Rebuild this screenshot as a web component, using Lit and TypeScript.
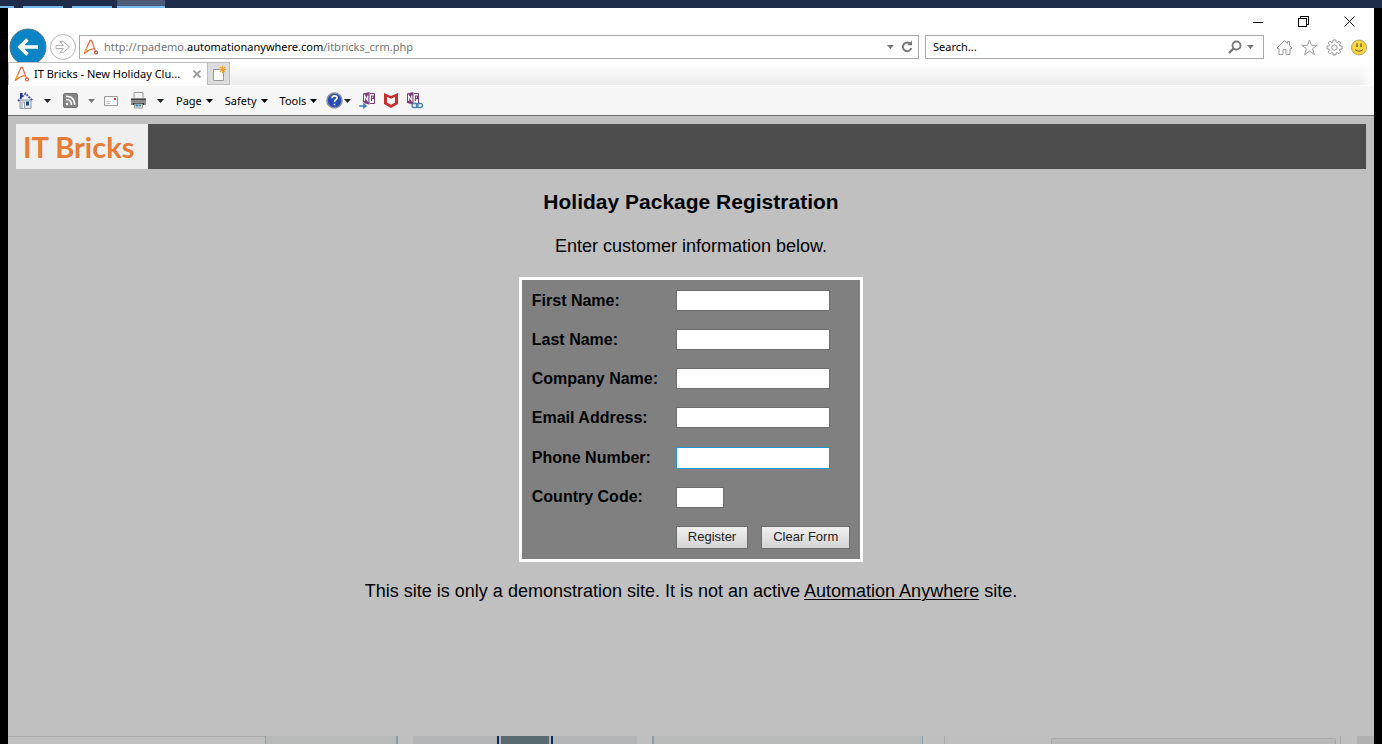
import { LitElement, html, css, svg } from "lit";
import { customElement } from "lit/decorators.js";

const aaMark = html`<svg width="16" height="16" viewBox="0 0 16 16" fill="none" stroke-linecap="round" stroke-linejoin="round" aria-hidden="true">
  <path d="M1.5 14 L7 1.5 L8.5 1.5 L10.5 7" stroke="#ef6a45" stroke-width="1.3" />
  <path d="M1.5 14 L3.6 9.5" stroke="#f7b02c" stroke-width="1.6" />
  <path d="M1.5 14.2 Q7 9.6 10.8 9.8 M10.5 7 L12.5 12.6" stroke="#f0703f" stroke-width="1.2" />
  <circle cx="13" cy="13.4" r="1.5" stroke="#e8533f" stroke-width="1.1" />
</svg>`;

const caret = (color = "#222") => html`<svg width="7" height="4" viewBox="0 0 7 4" aria-hidden="true"><path d="M0 0h7L3.5 4z" fill=${color} /></svg>`;

const noteShape = svg`<path d="M2 1.5 L8.5 0 V12.5 L2 11z" fill="#80397b"/><path d="M9 1.5h4.5v10H9" fill="#fff" stroke="#80397b"/><path d="M10.5 3.500v5.500M10.5 4h2v2.500h-2" fill="none" stroke="#80397b" stroke-width="1.200"/><path d="M3.6 8.8V3.8L6.8 8.6V3.4" fill="none" stroke="#fff" stroke-width="1.2"/>`;

@customElement("browser-chrome")
export class BrowserChrome extends LitElement {
  static styles = css`
    :host { display: block; background: #fff; color: #000; font: 11px/16px "Noto Sans", "Open Sans", sans-serif; }
    button { border: 0; padding: 0; margin: 0; background: none; font: inherit; color: inherit; display: flex; align-items: center; justify-content: center; }
    svg { display: block; flex: none; }
    .caption { display: flex; justify-content: flex-end; height: 27px; padding-right: 2px; }
    .caption button { width: 46px; height: 27px; }
    .nav { display: flex; align-items: center; height: 24px; padding: 0 7px 3px 0; }
    .back { width: 40px; height: 24px; }
    .forward { width: 30px; height: 24px; }
    .back svg, .forward svg { overflow: visible; }
    .field { display: flex; align-items: center; box-sizing: border-box; height: 24px; border: 1px solid #a9a9a9; background: #fff; }
    .address { flex: 830 1 0; margin-left: 1px; padding: 0 5px 0 3px; }
    .url { flex: 1; margin-left: 5px; color: #757575; white-space: nowrap; }
    .url b { font-weight: 400; color: #000; }
    .address .refresh { margin-left: 7px; }
    .search { flex: 321 1 0; margin-left: 6px; padding: 0 9px 0 7px; }
    .search input { flex: 1; min-width: 0; border: 0; outline: 0; padding: 0; background: none; font: inherit; }
    .search input::placeholder { color: #000; opacity: 1; }
    .search .drop { margin-left: 5px; }
    .tools { display: flex; gap: 8px; margin-left: 12px; }
    .tabs { display: flex; height: 23px; position: relative; background: linear-gradient(#fff, #ececec); }
    .tab { display: flex; align-items: center; box-sizing: border-box; width: 199px; padding: 0 6px 0 5px; background: #fff; border: 1px solid #bdbdbd; border-width: 1px 0 0 1px; }
    .title { flex: 1; margin-left: 4px; white-space: nowrap; }
    .new { box-sizing: border-box; width: 23px; border: 1px solid #bdbdbd; background: #dcdcdc; }
    .fade { width: 16px; margin-left: auto; background: linear-gradient(90deg, transparent, #fff); }
    .commands { display: flex; align-items: center; box-sizing: border-box; height: 31px; padding-left: 9px; background: #f6f6f6; border-top: 1px solid #fff; border-bottom: 1px solid #6c6c6c; }
    .commands button { height: 24px; }
    .split { gap: 10px; margin-right: 12px; }
    .mail { margin: 0 12px 0 -3px; }
    .menu { gap: 4px; margin-right: 12px; }
    .help { gap: 1px; margin: 0 8px 0 -3px; }
    .addon { margin-right: 7px; }
  `;

  render() {
    return html`
      <div class="caption">
        <button aria-label="Minimize"><svg width="11" height="11" shape-rendering="crispEdges"><path d="M1 6.5h10" stroke="#000" /></svg></button>
        <button aria-label="Restore"><svg width="11" height="11" fill="none" stroke="#000" shape-rendering="crispEdges"><path d="M.5 2.5h8v8h-8zM2.5 2.5v-2h8v8h-2" /></svg></button>
        <button aria-label="Close"><svg width="11" height="11" stroke="#000"><path d="M.5 .5l10 10M10.500 .5l-10 10" /></svg></button>
      </div>
      <div class="nav">
        <button class="back" aria-label="Back"><svg width="38" height="38" viewBox="0 0 38 38"><circle cx="19" cy="19" r="18" fill="#0a84c4" stroke="#51798f" /><path d="M29 19H11M18.500 11.500L11 19l7.500 7.500" fill="none" stroke="#fff" stroke-width="3.600" /></svg></button>
        <button class="forward" aria-label="Forward"><svg width="28" height="28" viewBox="0 0 28 28" fill="#fff" stroke="#b5b5b5"><circle cx="14" cy="14" r="12.500" /><path d="M7 12.500h7.500l-3.500-4h3.300L20.500 14l-6.200 5.500H11l3.500-4H7z" /></svg></button>
        <div class="field address">
          ${aaMark}
          <span class="url">http://rpademo.<b>automationanywhere.com</b>/itbricks_crm.php</span>
          <button aria-label="Show address history">${caret("#777")}</button>
          <button class="refresh" aria-label="Refresh"><svg width="12" height="14" viewBox="0 0 12 14" fill="none"><path d="M9.600 4.300A4.300 4.300 0 1 0 10.300 8" stroke="#777" stroke-width="1.900" /><path d="M6.300 5.200h4.700V.6z" fill="#777" /></svg></button>
        </div>
        <div class="field search">
          <input aria-label="Search" placeholder="Search..." />
          <button aria-label="Go"><svg width="14" height="14" viewBox="0 0 14 14" fill="none" stroke="#777"><circle cx="8.500" cy="5.500" r="4" stroke-width="1.800" /><path d="M5.500 8.500L1 13" stroke-width="2.400" /></svg></button>
          <button class="drop" aria-label="Search options">${caret("#777")}</button>
        </div>
        <div class="tools">
          <button aria-label="Home"><svg width="17" height="17" viewBox="0 0 17 17" fill="none" stroke="#999"><path d="M1 9L8.500 1.500 11.500 4.500V2.500h2v4L16 9l-1 1-1-.5v6h-4v-5H7v5H3v-6L2 10z" /></svg></button>
          <button aria-label="Favorites"><svg width="17" height="17" viewBox="0 0 17 17" fill="none" stroke="#999"><path d="M8.500 1l2 5.300h5.700l-4.600 3.400 1.800 5.900-4.900-3.500-4.900 3.500 1.800-5.900L.8 6.300h5.700z" /></svg></button>
          <button aria-label="Settings"><svg width="17" height="17" viewBox="0 0 17 17" fill="none" stroke="#999"><path d="M7 1h3v2l1.400.6 1.500-1.500 2 2L13.400 5.600 14 7h2v3h-2l-.6 1.400 1.500 1.500-2 2-1.500-1.500L10 14v2H7v-2l-1.400-.6-1.500 1.500-2-2 1.500-1.500L3 10H1V7h2l.6-1.400L2.100 4.100l2-2 1.500 1.500L7 3z" /><circle cx="8.500" cy="8.500" r="2.700" /></svg></button>
          <button aria-label="Feedback"><svg width="16" height="17" viewBox="0 0 16 17"><circle cx="8" cy="8.500" r="7.500" fill="#fbd53c" stroke="#b2a36a" /><path d="M6 4.500v3.500M10 4.500v3.500" stroke="#6b5a20" stroke-width="1.300" /><path d="M4 10.500q4 3.500 8 0" fill="none" stroke="#6b5a20" /></svg></button>
        </div>
      </div>
      <div class="tabs">
        <div class="tab">${aaMark}<span class="title">IT Bricks - New Holiday Clu...</span>
          <button aria-label="Close tab"><svg width="8" height="8" viewBox="0 0 8 8" stroke="#999" stroke-width="1.800"><path d="M.5 .5l7 7M7.500 .5l-7 7" /></svg></button>
        </div>
        <button class="new" aria-label="New tab"><svg width="16" height="16" viewBox="0 0 16 16"><path d="M2.500 3.500h10v11h-10z" fill="#fff" stroke="#999" /><path d="M11.500 0v7M8 3.500h7M9 1l5 5M14 1L9 6" stroke="#e8a330" stroke-width="1.100" /></svg></button>
        <div class="fade"></div>
      </div>
      <div class="commands">
        <button class="split" aria-label="Home page"><svg width="17" height="17" viewBox="0 0 17 17"><path d="M3 8h11v8.500H3z" fill="#dfe6ee" stroke="#8b98a8" /><path d="M1 9L8.500 1.500 16 9" fill="none" stroke="#4659b8" stroke-width="2" stroke-dasharray="2 1" /><path d="M3 1h2.500v4L3 7z" fill="#27309c" /><path d="M5 10h2.500v6.500H5z" fill="#f7f7f7" stroke="#98a3af" /><path d="M9 9.500h3v4H9z" fill="#194a7d" /></svg>${caret()}</button>
        <button class="split" aria-label="Feeds"><svg width="15" height="15" viewBox="0 0 15 15"><rect x=".5" y=".5" width="14" height="14" rx="1.500" fill="#858585" stroke="#737373" /><g fill="none" stroke="#fff" stroke-width="1.600"><path d="M3 6.500q5.500 0 5.500 5.500M3 3.300q8.700 0 8.700 8.700" /></g><circle cx="4" cy="11" r="1.200" fill="#fff" /></svg>${caret("#777")}</button>
        <button class="mail" aria-label="Read mail"><svg width="14" height="12" viewBox="0 0 14 12"><path d="M.5 1.500h13v9H.5z" fill="#fafafa" stroke="#9b9b9b" /><path d="M2 6.500h5M2 8.500h4" stroke="#ccc" /><path d="M10 3h2v2h-2z" fill="#d33" /></svg></button>
        <button class="split" aria-label="Print"><svg width="17" height="17" viewBox="0 0 17 17"><path d="M4 .5h9V7H4z" fill="#f5f5f5" stroke="#999" /><path d="M1 6h15v7H1z" fill="#8c8c8c" /><path d="M1 7.500h15" stroke="#444" /><path d="M3 11h11v2H3z" fill="#333" /><path d="M4.500 12h8v4h-8z" fill="#e8f0f0" stroke="#999" /><path d="M5.500 13.500h3" stroke="#2b79b5" stroke-width="2" /><path d="M9 13.500h2" stroke="#3ba06c" stroke-width="2" /></svg>${caret()}</button>
        <button class="menu">Page ${caret("#000")}</button>
        <button class="menu">Safety ${caret("#000")}</button>
        <button class="menu">Tools ${caret("#000")}</button>
        <button class="help" aria-label="Help"><svg width="17" height="17" viewBox="0 0 17 17"><circle cx="8.500" cy="8.500" r="7.500" fill="#254db3" stroke="#8c929c" stroke-width="1.600" /><path d="M6 6.300q.2-2.500 2.600-2.500t2.500 2q0 1.200-1.300 2T8.500 10.300M8.500 11.700v1.600" fill="none" stroke="#fff" stroke-width="1.700" /></svg>${caret()}</button>
        <button class="addon" aria-label="Send to OneNote"><svg width="17" height="17" viewBox="0 0 17 17"><g transform="translate(2 0)">${noteShape}</g><path d="M0 13h4v-3l4.500 4L4 17.500V15H0z" fill="#3f7fb8" stroke="#f6f6f6" stroke-width=".5" /></svg></button>
        <button class="addon" aria-label="Web protection"><svg width="16" height="17" viewBox="0 0 16 17"><path d="M1 1l7 3 7-3v11l-7 4-7-4z" fill="#c62f32" /><path d="M4 5l4 1.800L12 5v5.500L8 12.800 4 10.500z" fill="#f6f6f6" /></svg></button>
        <button class="addon" aria-label="Linked notes"><svg width="18" height="17" viewBox="0 0 18 17"><g transform="translate(-1 0)">${noteShape}</g><g fill="#f6f6f6" stroke="#4a7fb3" stroke-width="1.300"><rect x="6" y="11.500" width="6" height="4" rx="2" /><rect x="10.500" y="11.500" width="6" height="4" rx="2" fill="none" /></g></svg></button>
      </div>
    `;
  }
}

@customElement("registration-page")
export class RegistrationPage extends LitElement {
  static styles = css`
    :host { display: flex; flex-direction: column; align-items: center; flex: 1; padding: 8px 8px 0; background: silver; color: #000; font: 18px/22px "Liberation Sans", Arial, sans-serif; }
    .banner { align-self: stretch; background: #4d4d4d; display: flex; }
    .logo { box-sizing: border-box; width: 132px; height: 45px; padding-left: 7px; background: #efefef; color: #e87b35; font: 700 29px/45px Lato, sans-serif; white-space: nowrap; }
    h1 { margin: 21px 0 0; font-size: 21px; line-height: 24px; }
    p { margin: 21px 0 20px; }
    form { display: grid; grid-template-columns: 144px auto; align-content: space-between; align-items: center; justify-items: start; box-sizing: border-box; min-height: 285px; padding: 10px; border: 3px solid #fff; background: gray; }
    label { font-size: 16px; line-height: 20px; font-weight: 700; }
    input { box-sizing: border-box; width: 154px; height: 21px; margin: 0; padding: 1px; border: 1px solid #6d6d6d; border-radius: 0; background: #fff; outline: 0; font: 13px "Liberation Sans", Arial, sans-serif; }
    .short { width: 48px; }
    .active { height: 22px; border-color: #1e9ad6; }
    .actions { grid-column: 2; display: flex; gap: 13px; }
    button { box-sizing: border-box; height: 23px; padding: 0 11px; border: 1px solid #6d6d6d; border-radius: 0; background: linear-gradient(#f0f0f0, #d4d4d4); color: #222; font: 13px/20px "Liberation Sans", Arial, sans-serif; white-space: nowrap; }
    .note { margin: 18px 0 0; }
    a { color: #000; text-underline-offset: 2px; text-decoration-thickness: 1px; }
  `;

  private fields = [
    ["first", "First Name:", ""],
    ["last", "Last Name:", ""],
    ["company", "Company Name:", ""],
    ["email", "Email Address:", ""],
    ["phone", "Phone Number:", "active"],
    ["country", "Country Code:", "short"],
  ];

  render() {
    return html`
      <header class="banner"><div class="logo">IT Bricks</div></header>
      <h1>Holiday Package Registration</h1>
      <p>Enter customer information below.</p>
      <form @submit=${(e: Event) => e.preventDefault()}>
        ${this.fields.map(([id, text, kind]) => html`<label for=${id}>${text}</label><input id=${id} name=${id} class=${kind} />`)}
        <div class="actions"><button type="submit">Register</button><button type="reset">Clear Form</button></div>
      </form>
      <p class="note">This site is only a demonstration site. It is not an active <a href="#">Automation Anywhere</a> site.</p>
    `;
  }
}

@customElement("app-root")
export class AppRoot extends LitElement {
  static styles = css`
    :host { display: flex; flex-direction: column; min-height: 100vh; background: #000; }
    .taskbar { display: flex; gap: 9px; height: 8px; background: #1f2c4a; }
    .task { box-sizing: border-box; width: 40px; border-bottom: 2px solid #76b9ed; }
    .first { width: 14px; }
    .current { width: 48px; margin-left: -4px; background: #4d5a75; }
    .window { flex: 1; display: flex; flex-direction: column; margin: 0 8px; overflow: hidden; }
    .behind { display: grid; height: 8px; background: #bfbfbf; grid-template-columns: 257fr 133fr 15fr 84fr 56fr 84fr 15fr 271fr 21fr 107fr 285fr 4fr 17fr 17fr; }
    .line { border-top: 1px solid #a9a9a9; }
    .pane { background: #b7bab9; border: solid #8a9dab; border-width: 0 2px 0 1px; }
    .wide { border-width: 0 1px 0 2px; }
    .slate { background: #b3b4b7; }
    .thumb { background: #5a6b70; border: solid #0d2a52; border-width: 0 2px; box-shadow: inset 2px 0 #b3b4b7, inset -2px 0 #b3b4b7; }
    .rule { border-left: 1px solid #a9a9a9; }
    .box { margin-top: 2px; border: 1px solid #a9a9a9; border-bottom: 0; border-radius: 2px 2px 0 0; background: #b8b8b8; }
    .dark { background: #b0b0b0; }
  `;

  render() {
    return html`
      <div class="taskbar"><div class="task first"></div><div class="task"></div><div class="task"></div><div class="task current"></div></div>
      <div class="window">
        <browser-chrome></browser-chrome>
        <registration-page></registration-page>
        <div class="behind">
          <i class="line"></i><i class="pane"></i><i></i><i class="slate"></i><i class="thumb"></i><i class="slate"></i><i></i><i class="pane wide"></i><i></i><i class="rule"></i><i class="box"></i><i></i><i class="rule"></i><i class="dark"></i>
        </div>
      </div>
    `;
  }
}
